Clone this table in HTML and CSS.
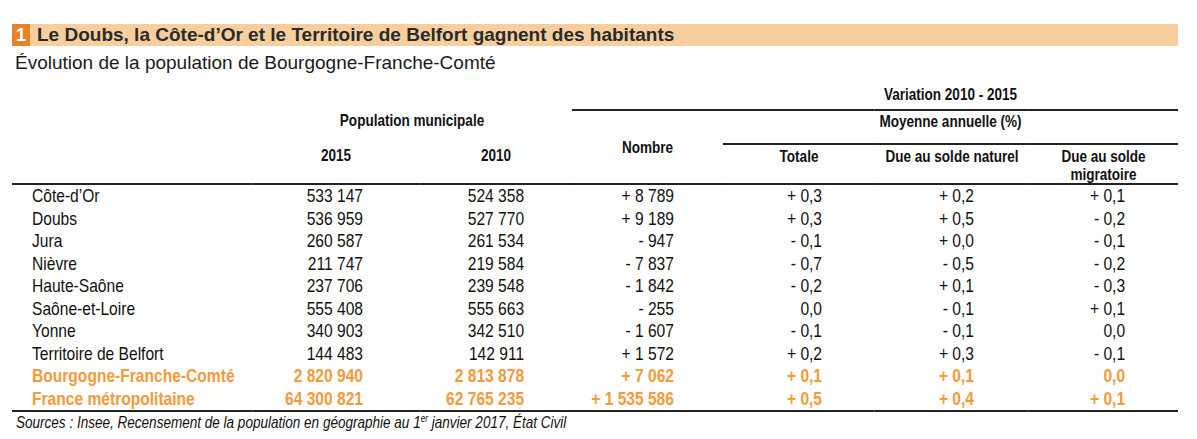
FILE: index.html
```html
<!DOCTYPE html>
<html lang="fr">
<head>
<meta charset="utf-8">
<title>Évolution de la population de Bourgogne-Franche-Comté</title>
<link rel="stylesheet" href="styles.css">
</head>
<body>
<div class="page">
  <div class="title-bar"><span class="num">1</span><span class="title-text">Le Doubs, la Côte-d’Or et le Territoire de Belfort gagnent des habitants</span></div>
  <div class="subtitle">Évolution de la population de Bourgogne-Franche-Comté</div>
  <div class="table-wrap">
  <table class="data">
    <colgroup>
      <col class="c-label"><col class="c-2015"><col class="c-2010"><col class="c-nombre"><col class="c-tot"><col class="c-nat"><col class="c-mig">
    </colgroup>
    <thead>
      <tr class="hr-a">
        <th colspan="3"></th>
        <th colspan="4" class="variation">Variation 2010 - 2015</th>
      </tr>
      <tr class="hr-b">
        <th rowspan="2" class="corner"></th>
        <th colspan="2" class="top">Population municipale</th>
        <th rowspan="2" class="nombre">Nombre</th>
        <th colspan="3" class="top moyenne">Moyenne annuelle (%)</th>
      </tr>
      <tr class="hr-c">
        <th>2015</th>
        <th>2010</th>
        <th>Totale</th>
        <th>Due au solde naturel</th>
        <th>Due au solde<br>migratoire</th>
      </tr>
    </thead>
    <tbody>
      <tr><td>Côte-d’Or</td><td>533 147</td><td>524 358</td><td>+ 8 789</td><td>+ 0,3</td><td>+ 0,2</td><td>+ 0,1</td></tr>
      <tr><td>Doubs</td><td>536 959</td><td>527 770</td><td>+ 9 189</td><td>+ 0,3</td><td>+ 0,5</td><td>- 0,2</td></tr>
      <tr><td>Jura</td><td>260 587</td><td>261 534</td><td>- 947</td><td>- 0,1</td><td>+ 0,0</td><td>- 0,1</td></tr>
      <tr><td>Nièvre</td><td>211 747</td><td>219 584</td><td>- 7 837</td><td>- 0,7</td><td>- 0,5</td><td>- 0,2</td></tr>
      <tr><td>Haute-Saône</td><td>237 706</td><td>239 548</td><td>- 1 842</td><td>- 0,2</td><td>+ 0,1</td><td>- 0,3</td></tr>
      <tr><td>Saône-et-Loire</td><td>555 408</td><td>555 663</td><td>- 255</td><td>0,0</td><td>- 0,1</td><td>+ 0,1</td></tr>
      <tr><td>Yonne</td><td>340 903</td><td>342 510</td><td>- 1 607</td><td>- 0,1</td><td>- 0,1</td><td>0,0</td></tr>
      <tr><td>Territoire de Belfort</td><td>144 483</td><td>142 911</td><td>+ 1 572</td><td>+ 0,2</td><td>+ 0,3</td><td>- 0,1</td></tr>
      <tr class="hl"><td>Bourgogne-Franche-Comté</td><td>2 820 940</td><td>2 813 878</td><td>+ 7 062</td><td>+ 0,1</td><td>+ 0,1</td><td>0,0</td></tr>
      <tr class="hl last"><td>France métropolitaine</td><td>64 300 821</td><td>62 765 235</td><td>+ 1 535 586</td><td>+ 0,5</td><td>+ 0,4</td><td>+ 0,1</td></tr>
    </tbody>
  </table>
  </div>
  <div class="sources"><span class="narrow">Sources : Insee, Recensement de la population en géographie au 1<sup>er</sup> janvier 2017, État Civil</span></div>
</div>
</body>
</html>
```

FILE: styles.css
```css
html, body {
  margin: 0;
  padding: 0;
  background: #fff;
}

.page {
  padding: 24px 0 0 12px;
  width: 1166px;
  font-family: "Liberation Sans", Arial, sans-serif;
  color: #111;
}

.title-bar {
  display: flex;
  align-items: center;
  height: 22px;
  background: #f7cf9e;
}

.num {
  display: flex;
  align-items: center;
  justify-content: center;
  width: 18px;
  height: 22px;
  background: #e9812a;
  color: #fff;
  font-weight: bold;
  font-size: 18px;
}

.title-text {
  margin-left: 7px;
  font-weight: bold;
  font-size: 19px;
  color: #2a2a2a;
}

.subtitle {
  margin-top: 5px;
  padding-left: 3px;
  font-size: 19px;
  line-height: 24px;
  color: #1a1a1a;
}

/* Table is laid out in Arial metrics then condensed to Arial Narrow proportions */
.table-wrap {
  width: 1166px;
  margin-top: 6px;
  overflow: hidden;
}

.data {
  border-collapse: collapse;
  table-layout: fixed;
  width: 1422px;
  font-family: "Liberation Sans", Arial, sans-serif;
  font-size: 19px;
  transform: scaleX(0.82);
  transform-origin: 0 0;
}

.c-label { width: 292.7px; }
.c-2015 { width: 204.9px; }
.c-2010 { width: 185.4px; }
.c-nombre { width: 184.1px; }
.c-tot { width: 185.4px; }
.c-nat { width: 187.8px; }
.c-mig { width: 181.7px; }

.data th {
  font-weight: bold;
  font-size: 16.5px;
  line-height: 18px;
  text-align: center;
  padding: 0;
  color: #111;
}

.hr-a th {
  height: 22px;
  vertical-align: bottom;
  padding-bottom: 6px;
}

.hr-a th.variation {
  border-bottom: 2px solid #222;
  padding-left: 184.1px;
}

.hr-b th {
  height: 31px;
  padding-top: 1px;
}

.hr-b th.top {
  vertical-align: top;
}

.hr-b th.moyenne {
  border-bottom: 2px solid #222;
}

.hr-b th.nombre,
.hr-b th.corner {
  vertical-align: middle;
  padding-top: 0;
  border-bottom: 2px solid #222;
}

.hr-c th {
  height: 36px;
  vertical-align: top;
  padding-top: 2px;
  border-bottom: 2px solid #222;
}

.data td {
  height: 22.5px;
  padding: 0;
  line-height: 20px;
  text-align: right;
  vertical-align: middle;
  white-space: nowrap;
}

.data td:nth-child(1) { text-align: left; padding-left: 24.4px; }
.data td:nth-child(2) { padding-right: 69.5px; }
.data td:nth-child(3) { padding-right: 58.5px; }
.data td:nth-child(4) { padding-right: 59.8px; }
.data td:nth-child(5) { padding-right: 64.6px; }
.data td:nth-child(6) { padding-right: 67.1px; }
.data td:nth-child(7) { padding-right: 64.6px; }

.data tr.hl td {
  color: #f39a3a;
  font-weight: bold;
}

.data tr.last td {
  border-bottom: 2px solid #222;
}

.sources {
  padding-left: 4px;
  font-style: italic;
  font-size: 16.5px;
  line-height: 20px;
  color: #111;
  white-space: nowrap;
}

.sources .narrow {
  display: inline-block;
  transform: scaleX(0.82);
  transform-origin: 0 0;
}

.sources sup {
  font-size: 10px;
  line-height: 0;
}
```
